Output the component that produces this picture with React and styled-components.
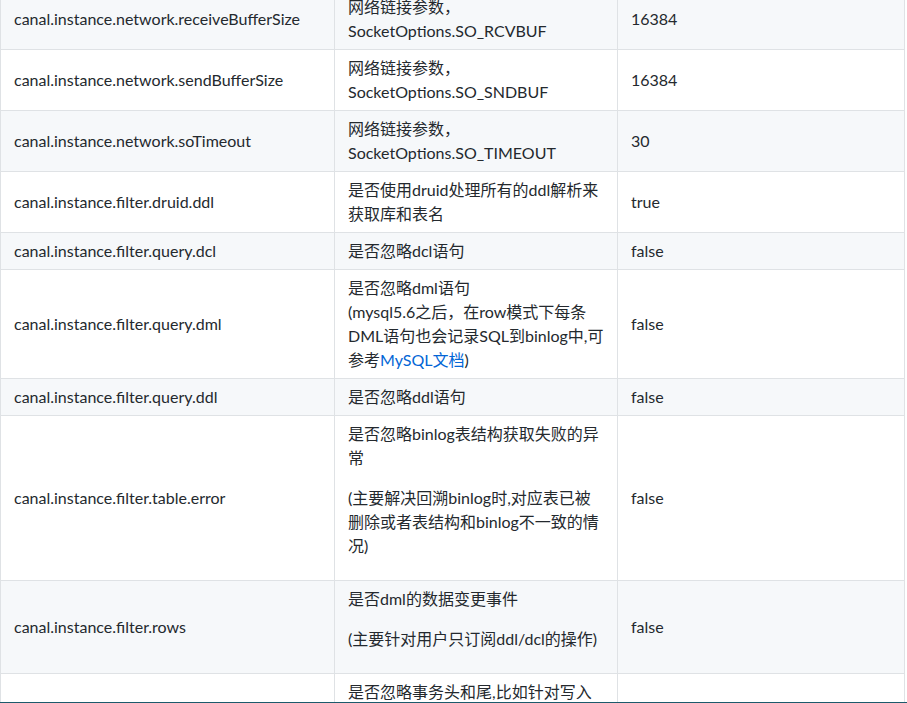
import React from 'react';
import styled, { createGlobalStyle } from 'styled-components';

const GlobalStyle = createGlobalStyle`
  html, body {
    margin: 0;
    padding: 0;
    background: #ffffff;
    overflow: hidden;
  }
  body {
    font-family: Lato, "Noto Sans CJK SC", "Liberation Sans", sans-serif;
    font-size: 16px;
    line-height: 24px;
    color: #24292e;
  }
`;

const Page = styled.div`
  margin-top: -12px;
`;

const Table = styled.table`
  width: 905px;
  border-collapse: collapse;
  border-spacing: 0;
  table-layout: fixed;
`;

const Row = styled.tr`
  background-color: #ffffff;

  &:nth-child(odd) {
    background-color: #f6f8fa;
  }
`;

const Cell = styled.td`
  padding: 6px 13px;
  border: 1px solid #dfe2e5;
  vertical-align: middle;
  text-align: left;
  word-wrap: break-word;
`;

const Para = styled.p`
  margin: 0 0 16px;
`;

const Link = styled.a`
  color: #0366d6;
  text-decoration: none;
`;

const BottomEdge = styled.div`
  position: fixed;
  left: 0;
  right: 0;
  bottom: 0;
  height: 1px;
  background: #1d5a6b;
`;

const rows = [
  { key: 'canal.instance.network.receiveBufferSize', desc: '网络链接参数，SocketOptions.SO_RCVBUF', value: '16384' },
  { key: 'canal.instance.network.sendBufferSize', desc: '网络链接参数，SocketOptions.SO_SNDBUF', value: '16384' },
  { key: 'canal.instance.network.soTimeout', desc: '网络链接参数，SocketOptions.SO_TIMEOUT', value: '30' },
  { key: 'canal.instance.filter.druid.ddl', desc: '是否使用druid处理所有的ddl解析来获取库和表名', value: 'true' },
  { key: 'canal.instance.filter.query.dcl', desc: '是否忽略dcl语句', value: 'false' },
  {
    key: 'canal.instance.filter.query.dml',
    desc: (
      <>
        是否忽略dml语句
        <br />
        (mysql5.6之后，在row模式下每条DML语句也会记录SQL到binlog中,可参考<Link href="#">MySQL文档</Link>)
      </>
    ),
    value: 'false',
  },
  { key: 'canal.instance.filter.query.ddl', desc: '是否忽略ddl语句', value: 'false' },
  {
    key: 'canal.instance.filter.table.error',
    desc: (
      <>
        <Para>是否忽略binlog表结构获取失败的异常</Para>
        <Para>(主要解决回溯binlog时,对应表已被删除或者表结构和binlog不一致的情况)</Para>
      </>
    ),
    value: 'false',
  },
  {
    key: 'canal.instance.filter.rows',
    desc: (
      <>
        <Para>是否dml的数据变更事件</Para>
        <Para>(主要针对用户只订阅ddl/dcl的操作)</Para>
      </>
    ),
    value: 'false',
  },
  {
    key: 'canal.instance.filter.transaction.entry',
    desc: '是否忽略事务头和尾,比如针对写入kakfa的消息时，不需要写入TransactionBegin/Transactionend事件',
    value: 'false',
  },
];

const App = () => {
  return (
    <Page>
      <GlobalStyle />
      <Table>
        <colgroup>
          <col style={{ width: 334 }} />
          <col style={{ width: 283 }} />
          <col style={{ width: 287 }} />
        </colgroup>
        <tbody>
          {rows.map((row) => (
            <Row key={row.key}>
              <Cell>{row.key}</Cell>
              <Cell>{row.desc}</Cell>
              <Cell>{row.value}</Cell>
            </Row>
          ))}
        </tbody>
      </Table>
      <BottomEdge />
    </Page>
  );
};

export default App;
